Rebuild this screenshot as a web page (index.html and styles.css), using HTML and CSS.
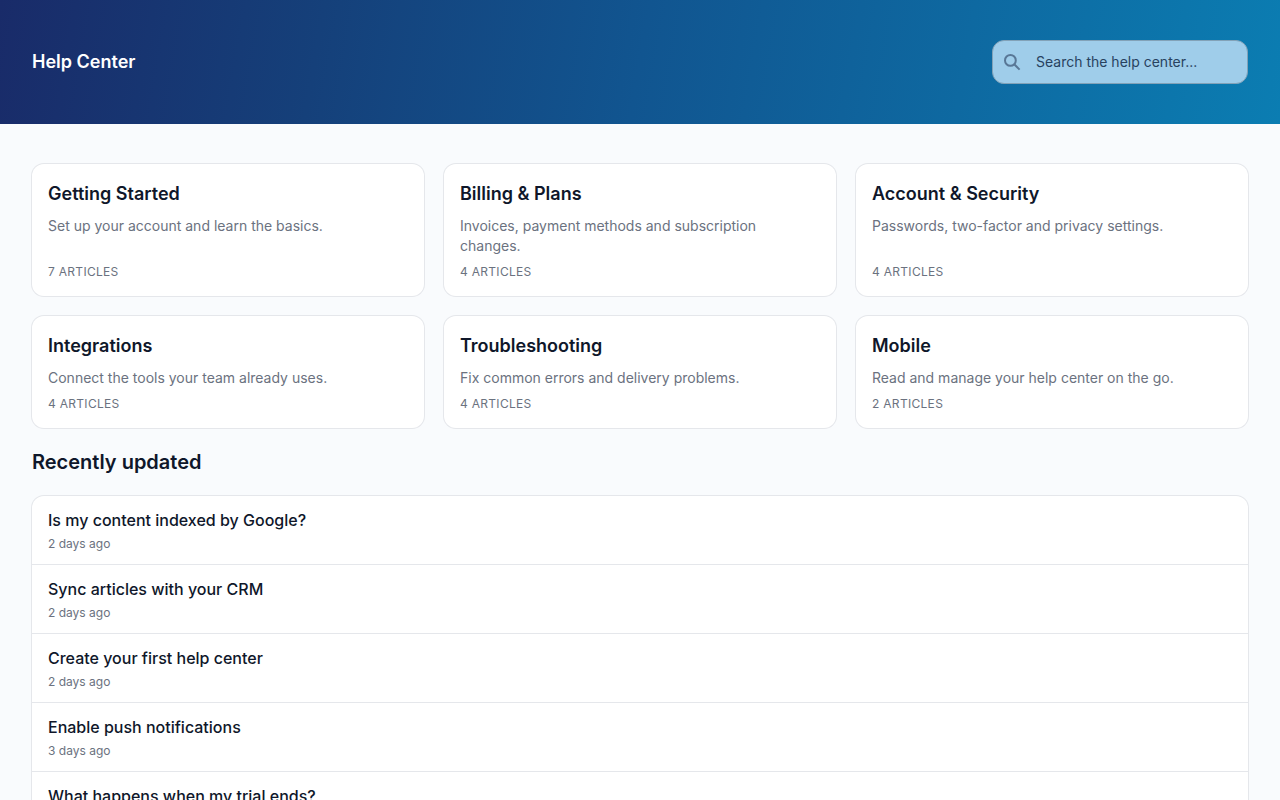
FILE: index.html
```html
<!DOCTYPE html>
<html lang="en">
<head>
  <meta charset="UTF-8" />
  <meta name="viewport" content="width=device-width, initial-scale=1.0" />
  <title>Help Center</title>
  <link rel="stylesheet" href="styles.css">
</head>
<body>
  <header class="header">
    <h1 class="brand"><a href="#">Help Center</a></h1>
    <form class="search" role="search">
      <svg class="search-icon" viewBox="0 0 20 20" fill="none" stroke="currentColor" stroke-width="2" aria-hidden="true">
        <circle cx="8.4" cy="8.4" r="5.4" />
        <path d="M12.2 12.2L17.6 17.6" />
      </svg>
      <input class="search-input" type="search" placeholder="Search the help center..." aria-label="Search the help center" />
    </form>
  </header>

  <main class="content">
    <section class="categories">
      <a class="card" href="#">
        <h2>Getting Started</h2>
        <p>Set up your account and learn the basics.</p>
        <span class="count">7 articles</span>
      </a>
      <a class="card" href="#">
        <h2>Billing &amp; Plans</h2>
        <p>Invoices, payment methods and subscription changes.</p>
        <span class="count">4 articles</span>
      </a>
      <a class="card" href="#">
        <h2>Account &amp; Security</h2>
        <p>Passwords, two-factor and privacy settings.</p>
        <span class="count">4 articles</span>
      </a>
      <a class="card" href="#">
        <h2>Integrations</h2>
        <p>Connect the tools your team already uses.</p>
        <span class="count">4 articles</span>
      </a>
      <a class="card" href="#">
        <h2>Troubleshooting</h2>
        <p>Fix common errors and delivery problems.</p>
        <span class="count">4 articles</span>
      </a>
      <a class="card" href="#">
        <h2>Mobile</h2>
        <p>Read and manage your help center on the go.</p>
        <span class="count">2 articles</span>
      </a>
    </section>

    <section class="recent">
      <h2 class="recent-title">Recently updated</h2>
      <ul class="article-list">
        <li><a href="#"><h3>Is my content indexed by Google?</h3><p>2 days ago</p></a></li>
        <li><a href="#"><h3>Sync articles with your CRM</h3><p>2 days ago</p></a></li>
        <li><a href="#"><h3>Create your first help center</h3><p>2 days ago</p></a></li>
        <li><a href="#"><h3>Enable push notifications</h3><p>3 days ago</p></a></li>
        <li><a href="#"><h3>What happens when my trial ends?</h3><p>3 days ago</p></a></li>
      </ul>
    </section>
  </main>
</body>
</html>
```
FILE: styles.css
```css
* {
  box-sizing: border-box;
}
body {
  margin: 0;
  font-family: Inter, sans-serif;
  font-size: 14px;
  line-height: 20px;
  background: #f9fbfd;
  color: #0f172a;
}
h1, h2, h3, p, ul {
  margin: 0;
  padding: 0;
}
a {
  color: inherit;
  text-decoration: none;
}
.header {
  display: flex;
  align-items: center;
  justify-content: space-between;
  padding: 40px 32px;
  background: linear-gradient(100deg, #192b69, #15407a 25%, #115590 50%, #0b7db2);
}
.brand {
  color: #fff;
  font-size: 18px;
  font-weight: 600;
  line-height: 28px;
}
.search {
  display: flex;
  align-items: center;
  gap: 14px;
  width: 256px;
  height: 44px;
  padding: 0 12px 0 9px;
  border: 1px solid #82a2b8;
  border-radius: 12px;
  background: #9fcdea;
}
.search-icon {
  flex: none;
  width: 20px;
  height: 20px;
  color: #587796;
}
.search-input {
  flex: 1;
  min-width: 0;
  padding: 0;
  border: none;
  outline: none;
  background: transparent;
  color: #1f2937;
  font: inherit;
}
.search-input::placeholder {
  color: #28425f;
}
.content {
  padding: 40px 32px;
}
.categories {
  display: grid;
  grid-template-columns: repeat(3, 1fr);
  gap: 20px;
}
.card {
  display: flex;
  flex-direction: column;
  padding: 16px;
  border-radius: 12px;
  background: #fff;
  box-shadow: 0 0 0 1px #e5e7eb;
}
.card h2 {
  font-size: 18px;
  font-weight: 600;
  line-height: 28px;
}
.card p {
  margin-top: 8px;
  color: #6b7280;
}
.count {
  margin-top: auto;
  padding-top: 8px;
  color: #6b7280;
  font-size: 12px;
  line-height: 16px;
  letter-spacing: 0.025em;
  text-transform: uppercase;
}
.recent {
  margin-top: 20px;
}
.recent-title {
  font-size: 20px;
  font-weight: 600;
  line-height: 28px;
}
.article-list {
  margin-top: 20px;
  border-radius: 12px;
  background: #fff;
  box-shadow: 0 0 0 1px #e5e7eb;
  list-style: none;
}
.article-list li + li {
  border-top: 1px solid #e5e7eb;
}
.article-list a {
  display: block;
  padding: 12px 16px;
}
.article-list h3 {
  font-size: 16px;
  font-weight: 500;
  line-height: 24px;
}
.article-list p {
  margin-top: 4px;
  color: #6b7280;
  font-size: 12px;
  line-height: 16px;
}
```
